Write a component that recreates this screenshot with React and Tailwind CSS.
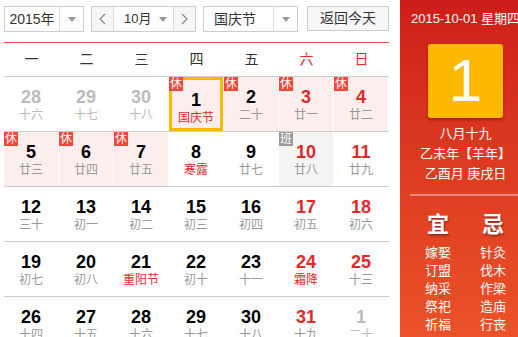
const weekdays = ['一', '二', '三', '四', '五', '六', '日']

const rows = [
  [
    { d: 28, l: '十六', o: true },
    { d: 29, l: '十七', o: true },
    { d: 30, l: '十八', o: true },
    { d: 1, l: '国庆节', fest: true, tag: '休', sel: true },
    { d: 2, l: '二十', tag: '休' },
    { d: 3, l: '廿一', tag: '休' },
    { d: 4, l: '廿二', tag: '休' },
  ],
  [
    { d: 5, l: '廿三', tag: '休' },
    { d: 6, l: '廿四', tag: '休' },
    { d: 7, l: '廿五', tag: '休' },
    { d: 8, l: '寒露', fest: true },
    { d: 9, l: '廿七' },
    { d: 10, l: '廿八', tag: '班' },
    { d: 11, l: '廿九' },
  ],
  [
    { d: 12, l: '三十' },
    { d: 13, l: '初一' },
    { d: 14, l: '初二' },
    { d: 15, l: '初三' },
    { d: 16, l: '初四' },
    { d: 17, l: '初五' },
    { d: 18, l: '初六' },
  ],
  [
    { d: 19, l: '初七' },
    { d: 20, l: '初八' },
    { d: 21, l: '重阳节', fest: true },
    { d: 22, l: '初十' },
    { d: 23, l: '十一' },
    { d: 24, l: '霜降', fest: true },
    { d: 25, l: '十三' },
  ],
  [
    { d: 26, l: '十四' },
    { d: 27, l: '十五' },
    { d: 28, l: '十六' },
    { d: 29, l: '十七' },
    { d: 30, l: '十八' },
    { d: 31, l: '十九' },
    { d: 1, l: '二十', o: true },
  ],
]

const yi = ['嫁娶', '订盟', '纳采', '祭祀', '祈福']
const ji = ['针灸', '伐木', '作梁', '造庙', '行丧']

function Caret() {
  return (
    <svg width="8" height="5" viewBox="0 0 8 5" className="shrink-0">
      <path d="M0 0h8L4 5z" fill="#999" />
    </svg>
  )
}

function Chevron({ left }) {
  return (
    <svg width="7" height="12" viewBox="0 0 7 12">
      <path d={left ? 'M6 1L1 6l5 5' : 'M1 1l5 5-5 5'} stroke="#888" strokeWidth="1.2" fill="none" />
    </svg>
  )
}

function Cell({ c, col }) {
  const weekend = col >= 5
  let bg = 'bg-white'
  if (c.tag === '休') bg = 'bg-[#fdeeee]'
  if (c.tag === '班') bg = 'bg-[#f4f4f4]'
  let numColor = 'text-black'
  if (c.o) numColor = 'text-[#bbbbbb]'
  else if (weekend) numColor = 'text-[#e02a2a]'
  const lunarColor = c.fest ? 'text-[#e02a2a]' : c.o ? 'text-[#bbbbbb]' : 'text-[#999999]'
  return (
    <div className="w-[55px] h-[54px] pr-px">
      <div className={`relative h-full flex flex-col items-center pt-[10px] ${bg} ${c.sel ? 'border-[3px] border-[#ffb800] pt-[7px]' : ''}`}>
        {c.tag && (
          <span className={`absolute ${c.sel ? '-left-[3px] -top-[3px]' : 'left-0 top-0'} w-[14px] h-[14px] flex items-center justify-center text-[12px] leading-none text-white ${c.tag === '休' ? 'bg-[#f2473a]' : 'bg-[#999999]'}`}>
            {c.tag}
          </span>
        )}
        <span className={`font-['Liberation_Sans',sans-serif] font-bold text-[18px] leading-[20px] ${numColor}`}>{c.d}</span>
        <span className={`text-[12px] leading-[16px] ${lunarColor}`}>{c.l}</span>
      </div>
    </div>
  )
}

export default function App() {
  return (
    <div className="w-[518px] h-[337px] overflow-hidden bg-white font-['Liberation_Sans','Noto_Sans_CJK_SC',sans-serif] text-[#333]">
      <div className="flex w-[531px]">
        <div className="w-[400px] pl-[4px] pr-[11px] pt-[6px]">
          {/* toolbar */}
          <div className="flex items-start h-[26px] text-[14px] whitespace-nowrap">
            <div className="flex w-[80px] h-[26px] border border-[#cccccc]">
              <span className="w-[55px] flex items-center justify-center border-r border-[#dddddd]">2015年</span>
              <span className="flex-1 flex items-center justify-center"><Caret /></span>
            </div>
            <div className="ml-[7px] flex w-[105px] h-[26px] border border-[#cccccc]">
              <span className="w-[22px] flex items-center justify-center bg-[#f6f6f6] border-r border-[#dddddd]"><Chevron left /></span>
              <span className="w-[60px] flex items-center pl-[10px] border-r border-[#dddddd] text-[13px]">
                <span className="w-[35px]">10月</span>
                <Caret />
              </span>
              <span className="flex-1 flex items-center justify-center bg-[#f6f6f6]"><Chevron /></span>
            </div>
            <div className="ml-[7px] flex w-[95px] h-[26px] border border-[#cccccc]">
              <span className="w-[70px] flex items-center pl-[10px] border-r border-[#dddddd]">国庆节</span>
              <span className="flex-1 flex items-center justify-center"><Caret /></span>
            </div>
            <div className="ml-[9px] w-[82px] h-[25px] border border-[#cccccc] bg-[#f7f7f7] flex items-center justify-center">返回今天</div>
          </div>
          {/* weekday header */}
          <div className="mt-[10px] border-t border-[#f0503f] border-b border-b-[#cccccc] h-[35px] flex">
            {weekdays.map((w, i) => (
              <div key={w} className={`w-[55px] flex items-center justify-center text-[14px] ${i >= 5 ? 'text-[#e02a2a]' : 'text-[#333]'}`}>{w}</div>
            ))}
          </div>
          {rows.map((r, ri) => (
            <div key={ri} className="flex border-b border-[#cccccc]">
              {r.map((c, ci) => <Cell key={ci} c={c} col={ci} />)}
            </div>
          ))}
        </div>
        {/* side panel */}
        <div className="w-[131px] h-[337px] bg-gradient-to-b from-[#cd1e19] to-[#ec5229] text-white flex flex-col items-center">
          <div className="mt-[11px] text-[13px] leading-[16px] whitespace-nowrap">2015-10-01 星期四</div>
          <div className="mt-[17px] w-[75px] h-[74px] rounded-[3px] bg-[#fcb900] shadow-[0_2px_3px_rgba(120,0,0,0.45)] flex items-center justify-center font-['Liberation_Sans',sans-serif] text-[60px] leading-none">1</div>
          <div className="mt-[6px] text-[13px] leading-[20px] text-center">
            <div>八月十九</div>
            <div>乙未年【羊年】</div>
            <div>乙酉月 庚戌日</div>
          </div>
          <div className="mt-[10px] self-end w-[121px] h-[2px] bg-white/40" />
          <div className="mt-[16px] flex w-[110px]">
            {[['宜', yi], ['忌', ji]].map(([t, list]) => (
              <div key={t} className="w-[55px] flex flex-col items-center">
                <div className="text-[22px] leading-[26px] font-bold [text-shadow:1px_2px_2px_rgba(0,0,0,0.35)]">{t}</div>
                <div className="mt-[6px] text-[13px] leading-[18px] flex flex-col items-center">
                  {list.map((x) => <span key={x}>{x}</span>)}
                </div>
              </div>
            ))}
          </div>
        </div>
      </div>
    </div>
  )
}
